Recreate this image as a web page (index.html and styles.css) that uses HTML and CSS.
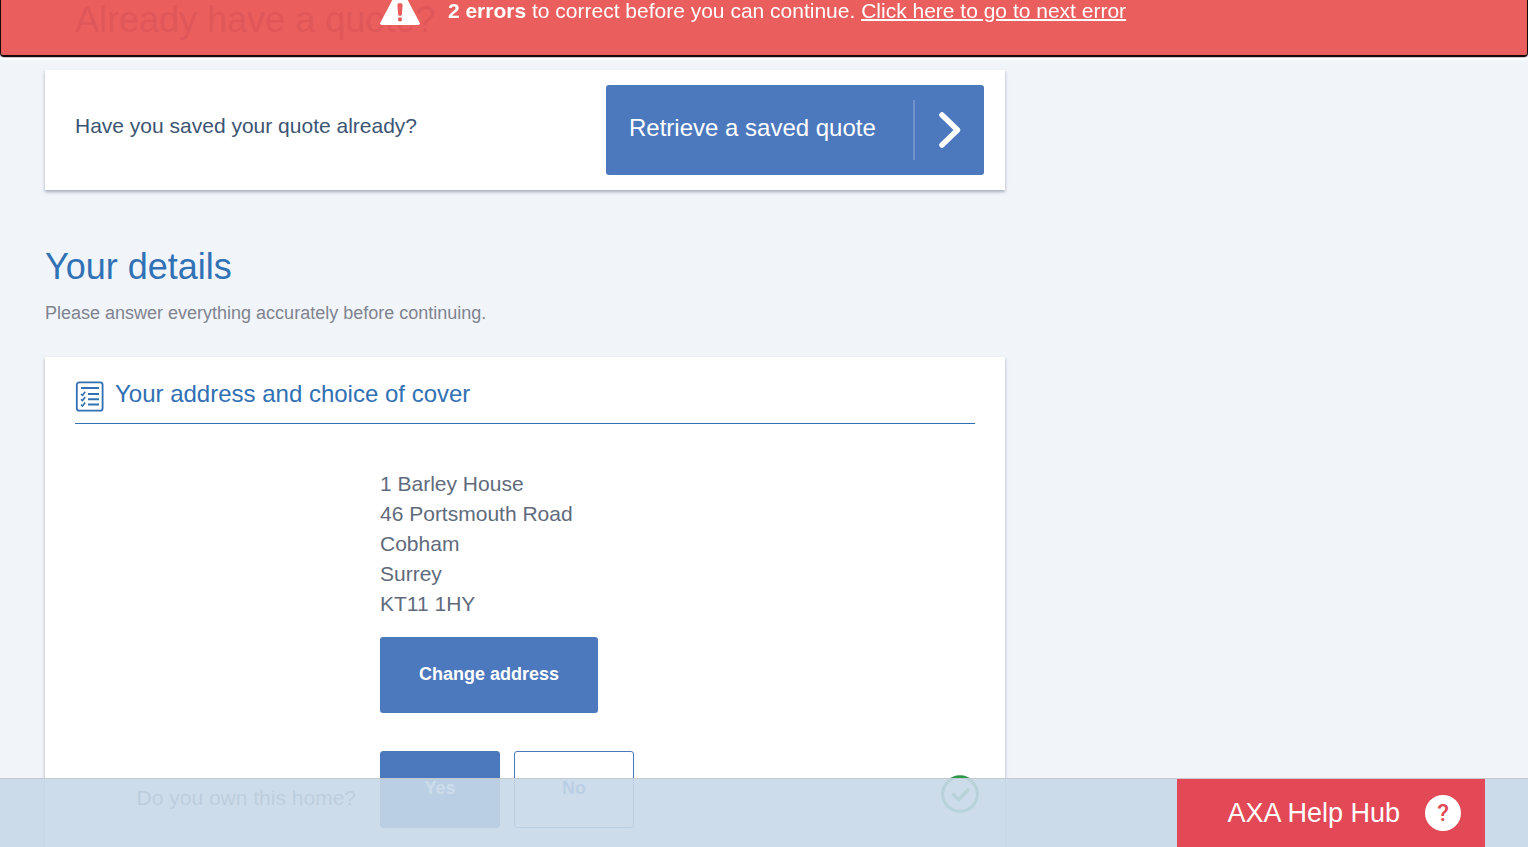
FILE: index.html
```html
<!DOCTYPE html>
<html lang="en">
<head>
<meta charset="utf-8">
<title>Your details</title>
<link rel="stylesheet" href="styles.css">
</head>
<body>
<div class="error-banner" role="alert">
  <svg class="warning-icon" viewBox="0 0 40 36" aria-hidden="true">
    <path fill="#fff" fill-rule="evenodd" d="M17.400 1.500a3 3 0 0 1 5.200 0l17 32c.8 1.300 0 2.500-1.400 2.500h-36.400c-1.400 0-2.200-1.200-1.400-2.500zM17.400 16.500l.7 8.800c.1 2 3.700 2 3.800 0l.7-8.800c.2-3.200-5.400-3.200-5.200 0zM20 28.300a2.100 2.100 0 1 0 0 4.200 2.100 2.100 0 0 0 0-4.200z"/>
  </svg>
  <p class="error-text"><strong>2 errors</strong> to correct before you can continue. <a href="#own-home">Click here to go to next error</a></p>
</div>

<main class="page">
  <h2 class="section-title saved-title">Already have a quote?</h2>
  <section class="card retrieve-card">
    <p class="retrieve-text">Have you saved your quote already?</p>
    <button class="retrieve-button" type="button">
      <span class="retrieve-label">Retrieve a saved quote</span>
      <span class="retrieve-arrow">
        <svg class="chevron" viewBox="0 0 22 36" aria-hidden="true"><path d="M3 3l15.500 15L3 33" fill="none" stroke="#fff" stroke-width="5.500" stroke-linecap="round" stroke-linejoin="round"/></svg>
      </span>
    </button>
  </section>

  <h2 class="section-title">Your details</h2>
  <p class="intro">Please answer everything accurately before continuing.</p>

  <section class="card details-card">
    <h3 class="card-title">
      <svg class="list-icon" viewBox="0 0 29 31" fill="none" stroke="#3070b3" aria-hidden="true">
        <rect x="1.800" y="1.300" width="25.800" height="28.400" rx="2.500" stroke-width="1.800"/>
        <path stroke-width="2" d="M6 7h18M13 13h11M13 18.300h11M13 23.500h11"/>
        <path stroke-width="1.600" d="M6 13l1.500 1.300 2.700-3.600M6 18.300l1.500 1.300 2.700-3.600M6 23.700l1.500 1.300 2.700-3.600"/>
      </svg>
      Your address and choice of cover
    </h3>
    <div class="form-row address-row">
      <div class="form-field">
        <address class="address">1 Barley House<br>46 Portsmouth Road<br>Cobham<br>Surrey<br>KT11 1HY</address>
        <button class="button change-button" type="button">Change address</button>
      </div>
    </div>
    <div class="form-row" id="own-home" role="group" aria-labelledby="own-label">
      <p class="form-label" id="own-label">Do you own this home?</p>
      <div class="form-field answer">
        <div class="choices">
          <button class="button choice" type="button" aria-pressed="true">Yes</button>
          <button class="button choice choice-off" type="button" aria-pressed="false">No</button>
        </div>
        <svg class="valid-icon" viewBox="0 0 38 38" fill="none" stroke="#2b964c" aria-hidden="true">
          <circle cx="19" cy="19" r="17.300" stroke-width="3"/>
          <path d="M12.500 19.500l5.200 5 9.300-9.500" stroke-width="3.600" stroke-linecap="round"/>
        </svg>
      </div>
    </div>
  </section>
</main>

<footer class="help-bar">
  <button class="help-button" type="button">
    AXA Help Hub
    <span class="help-mark" aria-hidden="true">?</span>
  </button>
</footer>
</body>
</html>
```
FILE: styles.css
```css
* {
  box-sizing: border-box;
}

body {
  margin: 0;
  background: #f1f5fa;
  color: #5f6b7c;
  font: 21px/30px "Liberation Sans", Arial, sans-serif;
}

h2, h3, p {
  margin: 0;
  font-weight: normal;
}

button {
  border: 0;
  font-family: inherit;
  cursor: pointer;
}

.page {
  display: flex;
  flex-direction: column;
  min-height: 100vh;
  max-width: 1050px;
  padding: 0 45px;
}

.section-title {
  color: #3072b5;
  font-size: 36px;
  line-height: 40px;
}

.saved-title {
  padding-left: 30px;
  margin-bottom: 30px;
}

.card {
  background: #fff;
  box-shadow: 0 2px 3px rgba(30, 40, 70, 0.36);
}

.retrieve-card {
  display: flex;
  align-items: center;
  justify-content: space-between;
  padding: 15px 21px 15px 30px;
  margin-bottom: 57px;
}

.retrieve-text {
  padding-bottom: 8px;
  color: #3b5573;
}

.retrieve-button {
  display: flex;
  align-items: center;
  justify-content: space-between;
  width: 378px;
  padding: 15px 23px;
  border-radius: 3px;
  background: #4c78be;
  color: #fff;
  font-size: 24px;
  line-height: 30px;
}

.retrieve-label {
  padding-bottom: 4px;
}

.retrieve-arrow {
  display: flex;
  align-items: center;
  height: 60px;
  padding-left: 24px;
  border-left: 2px solid #6f92cb;
}

.chevron {
  width: 22px;
  height: 36px;
}

.intro {
  margin: 12px 0 30px;
  color: #80838f;
  font-size: 18px;
  line-height: 28px;
}

.details-card {
  flex: 1;
  padding: 22px 30px 19px;
}

.card-title {
  display: flex;
  gap: 11px;
  padding-bottom: 14px;
  border-bottom: 1px solid #3070b3;
  color: #3070b3;
  font-size: 24px;
  line-height: 30px;
}

.list-icon {
  width: 29px;
  height: 31px;
  margin: 2px 0 -3px;
}

.form-row {
  display: grid;
  grid-template-columns: 281px 1fr;
  column-gap: 24px;
}

.form-field {
  grid-column: 2;
}

.address-row {
  padding: 45px 0 38px;
}

.address {
  margin-bottom: 18px;
  font-style: normal;
}

.button {
  border-radius: 3px;
  background: #4c78be;
  color: #fff;
  font-size: 18px;
  font-weight: bold;
  line-height: 30px;
}

.change-button {
  display: block;
  width: 218px;
  padding: 22px 0 24px;
}

.form-label {
  padding-top: 32px;
  text-align: right;
}

.answer {
  display: flex;
  align-items: flex-start;
  justify-content: space-between;
}

.choices {
  display: flex;
  gap: 14px;
}

.choice {
  width: 120px;
  padding: 21px 0 24px;
  border: 1px solid #4c78be;
}

.choice-off {
  background: #fff;
  color: #4c78be;
}

.valid-icon {
  width: 38px;
  height: 38px;
  margin: 24px -4px 0 0;
}

.error-banner {
  position: fixed;
  top: -48px;
  left: 0;
  right: 0;
  display: flex;
  align-items: flex-start;
  justify-content: center;
  gap: 28px;
  height: 105px;
  padding: 35px 22px 0 0;
  border: 2px solid #17090b;
  border-width: 2px 1px;
  border-radius: 4px;
  background: rgba(233, 85, 84, 0.95);
  background-clip: padding-box;
  box-shadow: 0 0 0 1px #c9cbce, 0 0 0 3px #fff;
  color: #fff;
}

.warning-icon {
  width: 40px;
  height: 36px;
}

.error-text {
  padding-top: 7px;
}

.error-text a {
  color: inherit;
  text-decoration-thickness: 2px;
}

.help-bar {
  position: fixed;
  bottom: 0;
  left: 0;
  right: 0;
  display: flex;
  justify-content: flex-end;
  padding-right: 43px;
  border-top: 1px solid #c5cad0;
  background: rgba(199, 216, 232, 0.9);
}

.help-button {
  display: flex;
  align-items: center;
  gap: 25px;
  padding: 16px 24px 16px 50px;
  background: #e24855;
  color: #fff;
  font-size: 27px;
  line-height: 36px;
}

.help-mark {
  width: 36px;
  border-radius: 50%;
  background: #fff;
  color: #e24855;
  font-family: Roboto, sans-serif;
  font-size: 24px;
  font-weight: 500;
  text-align: center;
}
```
